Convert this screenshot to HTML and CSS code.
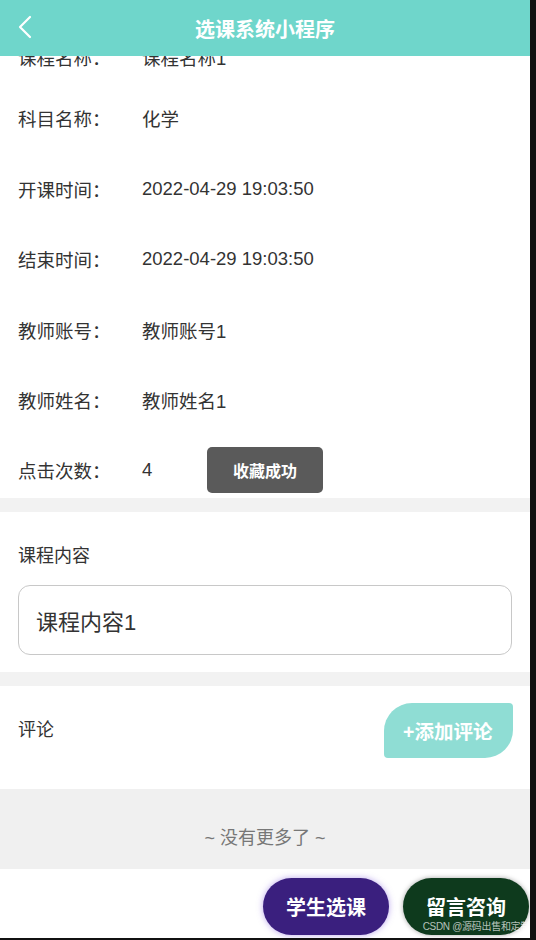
FILE: index.html
```html
<!DOCTYPE html>
<html lang="zh-CN">
<head>
    <meta charset="UTF-8">
    <meta name="viewport" content="width=device-width, initial-scale=1.0">
    <title>选课系统小程序</title>
    <link rel="stylesheet" href="styles.css">
</head>
<body>
    <div class="pantalla">
        <!-- Barra superior -->
        <header class="cabecera">
            <span class="volver">
                <svg width="16" height="24" viewBox="0 0 16 24"><path d="M13 2 L3 12 L13 22" fill="none" stroke="#fff" stroke-width="2.2" stroke-linecap="round" stroke-linejoin="round"/></svg>
            </span>
            <h1 class="titulo">选课系统小程序</h1>
        </header>

        <!-- Datos del curso -->
        <section class="detalle">
            <div class="fila"><span class="etiqueta">课程名称：</span><span>课程名称1</span></div>
            <div class="fila"><span class="etiqueta">科目名称：</span><span>化学</span></div>
            <div class="fila"><span class="etiqueta">开课时间：</span><span>2022-04-29 19:03:50</span></div>
            <div class="fila"><span class="etiqueta">结束时间：</span><span>2022-04-29 19:03:50</span></div>
            <div class="fila"><span class="etiqueta">教师账号：</span><span>教师账号1</span></div>
            <div class="fila"><span class="etiqueta">教师姓名：</span><span>教师姓名1</span></div>
            <div class="fila"><span class="etiqueta">点击次数：</span><span>4</span></div>
        </section>

        <section class="contenido">
            <div class="subtitulo">课程内容</div>
            <div class="caja">课程内容1</div>
        </section>

        <section class="comentarios">
            <span class="subtitulo">评论</span>
            <button class="agregar">+添加评论</button>
        </section>

        <div class="fin">~ 没有更多了 ~</div>

        <!-- Botones flotantes -->
        <div class="flotantes">
            <button class="btn morado">学生选课</button>
            <button class="btn verde">留言咨询</button>
        </div>
        <div class="marca">CSDN @源码出售和定制</div>

        <div class="aviso">收藏成功</div>
    </div>
</body>
</html>
```

FILE: styles.css
```css
/* Estilos generales */
body {
    margin: 0;
    background: #111;
    font-family: "Liberation Sans", "Noto Sans CJK SC", sans-serif;
    color: #333;
}

.pantalla {
    position: relative;
    width: 530px;
    height: 938px;
    overflow: hidden;
    background: #fff;
}

/* Cabecera */
.cabecera {
    position: absolute;
    top: 0;
    left: 0;
    right: 0;
    height: 56px;
    background: #6fd6cb;
    display: flex;
    align-items: center;
    justify-content: center;
    z-index: 2;
}
.volver {
    position: absolute;
    left: 17px;
    top: 15px;
}
.titulo {
    margin: 0;
    color: #fff;
    font-size: 20px;
    font-weight: bold;
}

/* Filas de datos */
.detalle {
    padding: 36px 0 7px 18px;
    display: flex;
    flex-direction: column;
    gap: 28.4px;
}
.fila {
    display: flex;
    align-items: center;
    height: 42px;
    font-size: 18.5px;
}
.fila:first-child {
    margin-bottom: -9px;
}
.etiqueta {
    width: 124px;
}

/* Contenido */
.contenido {
    border-top: 14px solid #f2f2f2;
    padding: 32px 18px 17px;
}
.subtitulo {
    font-size: 18px;
    line-height: 24px;
}
.caja {
    margin-top: 17px;
    height: 68px;
    border: 1px solid #c8c8c8;
    border-radius: 12px;
    padding: 0 17px;
    display: flex;
    align-items: center;
    font-size: 22px;
}

/* Comentarios */
.comentarios {
    border-top: 14px solid #f2f2f2;
    height: 117px;
    padding: 17px 17px 0 18px;
    box-sizing: border-box;
    display: flex;
    justify-content: space-between;
    align-items: flex-start;
}
.comentarios .subtitulo {
    margin-top: 15px;
}
.agregar {
    width: 129px;
    height: 55px;
    padding: 0 0 0 19px;
    border: none;
    border-radius: 28px 4px 28px 4px;
    background: #8fddd4;
    color: #fff;
    font-family: inherit;
    font-size: 19.5px;
    font-weight: bold;
    text-align: left;
    white-space: nowrap;
}

.fin {
    height: 80px;
    background: #f0f0f0;
    color: #777;
    font-size: 18px;
    text-align: center;
    padding-top: 34px;
    box-sizing: border-box;
}

/* Botones flotantes */
.flotantes {
    position: absolute;
    right: 1px;
    bottom: 3px;
    display: flex;
    gap: 14px;
}
.btn {
    width: 126px;
    height: 57px;
    border: none;
    border-radius: 29px;
    color: #fff;
    font-family: inherit;
    font-size: 20px;
    font-weight: bold;
}
.morado {
    background: #3a1f7e;
    box-shadow: 0 0 6px rgba(120, 80, 220, 0.5);
}
.verde {
    background: #0e3a1d;
    box-shadow: 0 0 5px rgba(0, 0, 0, 0.35);
}
.marca {
    position: absolute;
    right: 0;
    bottom: 5px;
    font-size: 10px;
    letter-spacing: -0.3px;
    color: rgba(255, 255, 255, 0.7);
}

/* Aviso */
.aviso {
    position: absolute;
    left: 207px;
    top: 447px;
    width: 116px;
    height: 46px;
    border-radius: 5px;
    background: #5a5a5a;
    color: #fff;
    font-size: 16px;
    font-weight: bold;
    display: flex;
    align-items: center;
    justify-content: center;
}
```
